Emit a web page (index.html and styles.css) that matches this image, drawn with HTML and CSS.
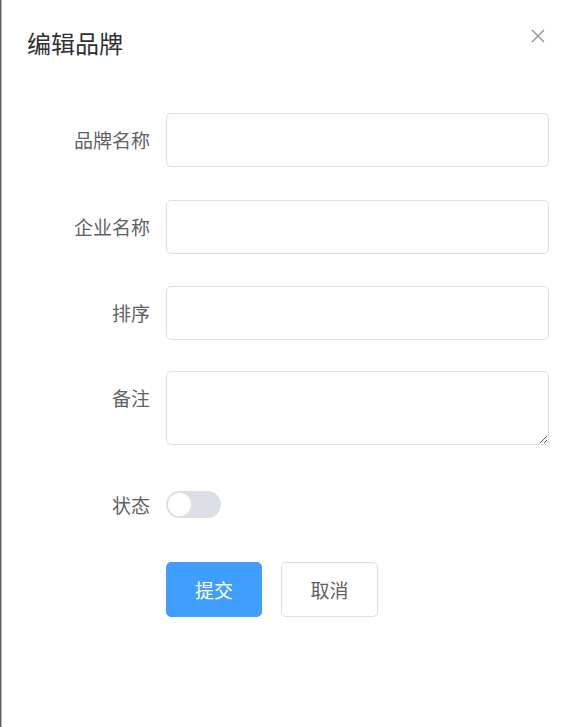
FILE: index.html
```html
<!DOCTYPE html>
<html lang="zh-CN">
<head>
<meta charset="utf-8">
<title>编辑品牌</title>
<link rel="stylesheet" href="styles.css">
</head>
<body>
<div class="drawer">
  <header class="drawer-header">
    <span class="drawer-title">编辑品牌</span>
    <button class="close-btn" aria-label="关闭">
      <svg width="16" height="16" viewBox="0 0 16 16"><path d="M2 2L14 14M14 2L2 14" stroke="#909399" stroke-width="1.4" fill="none"/></svg>
    </button>
  </header>
  <form class="form">
    <div class="form-item">
      <label class="form-label">品牌名称</label>
      <div class="form-content"><input class="input" type="text"></div>
    </div>
    <div class="form-item">
      <label class="form-label">企业名称</label>
      <div class="form-content"><input class="input" type="text"></div>
    </div>
    <div class="form-item item-before-textarea">
      <label class="form-label">排序</label>
      <div class="form-content"><input class="input" type="text"></div>
    </div>
    <div class="form-item">
      <label class="form-label">备注</label>
      <div class="form-content"><textarea class="textarea"></textarea></div>
    </div>
    <div class="form-item item-switch">
      <label class="form-label">状态</label>
      <div class="form-content"><span class="switch"><span class="switch-knob"></span></span></div>
    </div>
    <div class="form-item item-actions">
      <div class="form-label"></div>
      <div class="form-content actions">
        <button type="button" class="btn btn-primary">提交</button>
        <button type="button" class="btn btn-default">取消</button>
      </div>
    </div>
  </form>
</div>
</body>
</html>
```
FILE: styles.css
```css
* { box-sizing: border-box; }
html, body { margin: 0; padding: 0; height: 100%; background: #fff; }
body {
  font-family: "Noto Sans CJK SC", "Liberation Sans", sans-serif;
  color: #606266;
}
.drawer {
  height: 727px;
  border-left: 1px solid #5a5a5a;
  box-shadow: inset 1px 0 0 #b8b8b8;
}
.drawer-header {
  display: flex;
  align-items: center;
  justify-content: space-between;
  padding: 23px 29px 0 26px;
  height: 60px;
}
.drawer-title {
  font-size: 24px;
  line-height: 36px;
  color: #303133;
  margin-top: 2px;
}
.close-btn {
  border: none;
  background: none;
  padding: 0;
  width: 16px;
  height: 16px;
  display: flex;
  margin-top: -12px;
}
.form {
  padding: 53px 26px 0 27px;
}
.form-item {
  display: flex;
  margin-bottom: 32.5px;
}
.item-before-textarea { margin-bottom: 31px; }
.form-label {
  width: 138px;
  flex: none;
  padding-right: 16px;
  text-align: right;
  font-size: 19px;
  line-height: 54px;
  color: #606266;
}
.form-content { flex: 1; display: flex; align-items: center; }
.input {
  width: 100%;
  height: 54px;
  border: 1px solid #dcdfe6;
  border-radius: 5px;
  outline: none;
  padding: 0 20px;
  font-size: 19px;
  font-family: inherit;
}
.textarea {
  display: block;
  width: 100%;
  height: 74px;
  border: 1px solid #dcdfe6;
  border-radius: 5px;
  outline: none;
  padding: 7px 20px;
  font-size: 19px;
  font-family: inherit;
  resize: vertical;
}
.item-switch { margin-top: 3px; margin-bottom: 30px; }
.switch {
  display: inline-block;
  position: relative;
  width: 55px;
  height: 27px;
  border-radius: 14px;
  background: #dcdfe6;
}
.switch-knob {
  position: absolute;
  left: 2px;
  top: 2px;
  width: 23px;
  height: 23px;
  border-radius: 50%;
  background: #fff;
}
.actions { gap: 19px; }
.btn {
  width: 96px;
  height: 55px;
  border-radius: 5px;
  font-size: 19px;
  font-family: inherit;
  padding: 0;
  cursor: pointer;
}
.btn-primary {
  background: #409eff;
  border: 1px solid #409eff;
  color: #fff;
}
.btn-default {
  width: 97px;
  background: #fff;
  border: 1px solid #dcdfe6;
  color: #606266;
}
```
